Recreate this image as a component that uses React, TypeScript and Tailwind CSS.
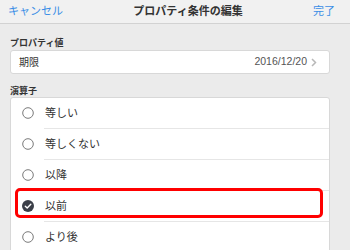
const options = ["等しい", "等しくない", "以降", "以前", "より後"]

function Radio({ checked }: { checked: boolean }) {
  if (checked) {
    return (
      <svg width="12" height="12" viewBox="0 0 12 12">
        <circle cx="6" cy="6" r="6" fill="#3b3f48" />
        <path d="M3.3 6.2 L5.2 8 L8.8 4.3" stroke="#fff" strokeWidth="1.4" fill="none" strokeLinecap="round" strokeLinejoin="round" />
      </svg>
    )
  }
  return (
    <svg width="12" height="12" viewBox="0 0 12 12">
      <circle cx="6" cy="6" r="5.3" stroke="#7a7a7a" strokeWidth="1" fill="#fff" />
    </svg>
  )
}

export default function App() {
  const selected = "以前"

  return (
    <div
      className="w-[350px] h-[250px] overflow-hidden bg-[#ebebeb] text-[#333]"
      style={{ fontFamily: '"Liberation Sans", "Noto Sans CJK JP", sans-serif' }}
    >
      {/* header */}
      <div className="h-[24px] flex items-center justify-between px-[8px] bg-[#f1f1f1] border-b border-[#d2d2d2]">
        <span className="text-[11px] text-[#3a8ee6]">キャンセル</span>
        <span className="text-[11px] font-bold text-[#333]">プロパティ条件の編集</span>
        <span className="text-[11px] text-[#3a8ee6] pr-[7px]">完了</span>
      </div>

      <div className="px-[10px] w-[340px]">
        <div className="mt-[13px] text-[9px] font-bold leading-[12px]">プロパティ値</div>
        <div className="mt-[1px] h-[24px] flex items-center justify-between bg-white border border-[#d8d8d8] rounded-[3px] pl-[8px] pr-[12px]">
          <span className="text-[10px] text-[#333]">期限</span>
          <span className="flex items-center gap-[4px] text-[10.5px] text-[#555]">
            2016/12/20
            <svg width="6" height="9" viewBox="0 0 6 9">
              <path d="M1 1 L4.5 4.5 L1 8" stroke="#b8b8b8" strokeWidth="1.5" fill="none" />
            </svg>
          </span>
        </div>

        <div className="mt-[12px] text-[9px] font-bold leading-[11px]">演算子</div>
        <div className="bg-white border border-[#d8d8d8] rounded-[3px]">
          {options.map((o, i) => (
            <div key={o} className="relative">
              {i > 0 && <div className="ml-[33px] h-px bg-[#e6e6e6]" />}
              <div className="h-[30px] flex items-center pl-[11px] gap-[11px]">
                <Radio checked={o === selected} />
                <span className="text-[11px] text-[#333]">{o}</span>
              </div>
              {o === selected && (
                <div className="absolute left-[4px] right-[6px] top-[-2px] h-[30px] border-[3px] border-[#ff0000] rounded-[5px]" />
              )}
            </div>
          ))}
        </div>
      </div>
    </div>
  )
}
